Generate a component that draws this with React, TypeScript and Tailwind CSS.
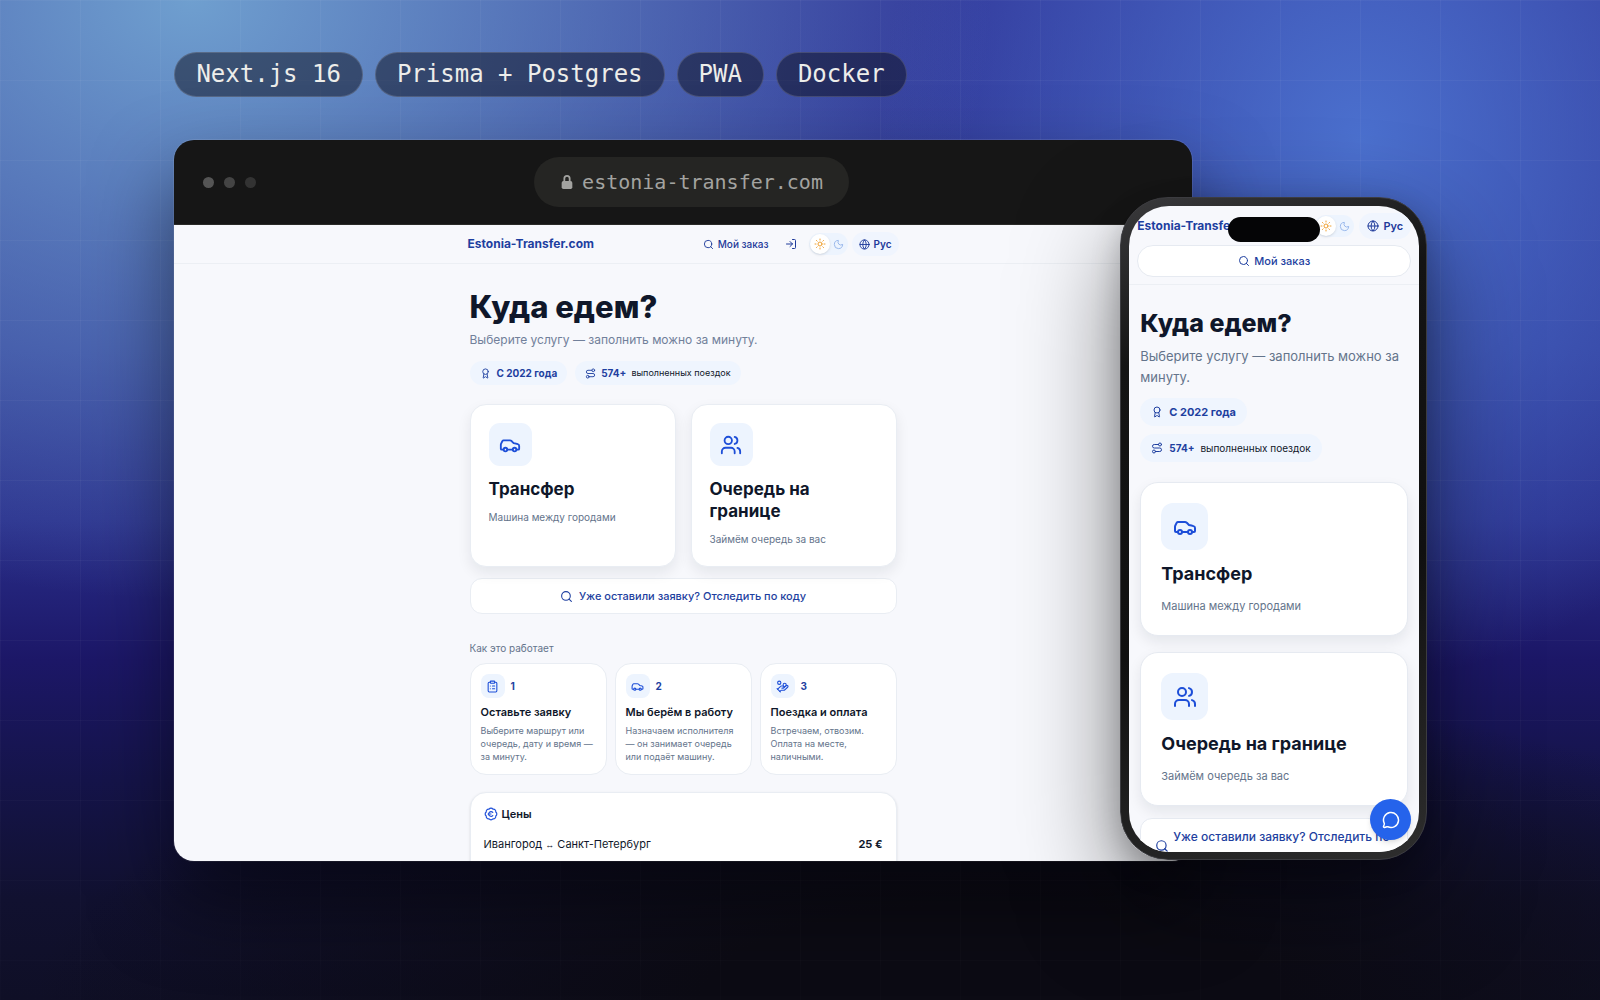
import {
  Award,
  BadgeEuro,
  Car,
  ClipboardList,
  Globe,
  HandCoins,
  LogIn,
  MessageCircle,
  Moon,
  Route,
  Search,
  Sun,
  Users,
  type LucideIcon,
} from "lucide-react";

const stack = ["Next.js 16", "Prisma + Postgres", "PWA", "Docker"];

const services: { icon: LucideIcon; title: string; text: string }[] = [
  { icon: Car, title: "Трансфер", text: "Машина между городами" },
  { icon: Users, title: "Очередь на границе", text: "Займём очередь за вас" },
];

const steps: { icon: LucideIcon; title: string; text: string }[] = [
  {
    icon: ClipboardList,
    title: "Оставьте заявку",
    text: "Выберите маршрут или очередь, дату и время — за минуту.",
  },
  {
    icon: Car,
    title: "Мы берём в работу",
    text: "Назначаем исполнителя — он занимает очередь или подаёт машину.",
  },
  {
    icon: HandCoins,
    title: "Поездка и оплата",
    text: "Встречаем, отвозим. Оплата на месте, наличными.",
  },
];

function ThemeSwitch() {
  return (
    <div className="flex items-center gap-[3px] rounded-full bg-[#edf4fe] p-px pr-1">
      <button
        aria-label="Светлая тема"
        className="flex size-5 items-center justify-center rounded-full bg-white text-[#f0a030] shadow"
      >
        <Sun className="size-3" />
      </button>
      <button aria-label="Тёмная тема" className="text-[#93b4ea]">
        <Moon className="size-[11px]" />
      </button>
    </div>
  );
}

function BrowserPage() {
  return (
    <div className="flex-1 overflow-hidden bg-[#f7f8fc] text-[#0f172a]">
      <header className="border-b border-[#eceff4]">
        <div className="mx-auto flex h-[38px] w-[431px] items-center justify-between">
          <a href="#" className="text-[12px] font-bold text-[#1e3fa0]">
            Estonia-Transfer.com
          </a>
          <div className="flex items-center gap-1 text-[#1e3a9a]">
            <a href="#" className="flex items-center gap-1 text-[10px] font-medium">
              <Search className="size-[11px]" />
              Мой заказ
            </a>
            <button aria-label="Войти" className="pr-2 pl-3">
              <LogIn className="size-3" />
            </button>
            <ThemeSwitch />
            <button className="flex h-6 items-center gap-1 rounded-full bg-[#f0f5fe] px-[7px] text-[10px] font-semibold">
              <Globe className="size-[11px]" />
              Рус
            </button>
          </div>
        </div>
      </header>

      <div className="mx-auto w-[427px] pt-[25px]">
        <h1 className="text-[31px] leading-9 font-extrabold">Куда едем?</h1>
        <p className="mt-[5px] text-[12px] leading-5 text-[#71809a]">
          Выберите услугу — заполнить можно за минуту.
        </p>
        <div className="mt-[11px] flex gap-2">
          <span className="flex h-6 items-center gap-[6px] rounded-full bg-[#eff5fe] px-[10px] text-[10px] font-bold text-[#1e3fa0]">
            <Award className="size-[11px]" />С 2022 года
          </span>
          <span className="flex h-6 items-center gap-[5px] rounded-full bg-[#eff5fe] px-[10px] text-[9px]">
            <Route className="size-[11px] text-[#1e3fa0]" />
            <b className="text-[10px] text-[#1e3fa0]">574+</b>
            выполненных поездок
          </span>
        </div>

        <div className="mt-[19px] grid grid-cols-2 gap-[15px]">
          {services.map((s) => (
            <a
              key={s.title}
              href="#"
              className="min-h-[163px] rounded-2xl border border-[#e9edf3] bg-white p-[18px] shadow-[0_6px_14px_rgba(15,23,42,0.08)]"
            >
              <span className="flex size-[43px] items-center justify-center rounded-[11px] bg-[#edf4fe] text-[#1d4ed8]">
                <s.icon className="size-[22px]" />
              </span>
              <h2 className="mt-3 text-[17px] leading-[22px] font-bold">{s.title}</h2>
              <p className="mt-[9px] text-[10px] leading-4 text-[#64748b]">{s.text}</p>
            </a>
          ))}
        </div>

        <button className="mt-[11px] flex h-9 w-full items-center justify-center gap-[6px] rounded-xl border border-[#e9edf3] bg-white text-[11px] font-medium text-[#1e3fa0]">
          <Search className="size-[13px]" />
          Уже оставили заявку? Отследить по коду
        </button>

        <h3 className="mt-[27px] text-[10px] leading-[14px] text-[#64748b]">Как это работает</h3>
        <div className="mt-2 grid grid-cols-3 gap-2">
          {steps.map((s, i) => (
            <div key={s.title} className="rounded-2xl border border-[#e9edf3] bg-white px-[10px] pt-[10px] pb-[11px]">
              <div className="flex items-center gap-[6px] text-[10px] font-bold text-[#1e3fa0]">
                <span className="flex size-6 items-center justify-center rounded-lg bg-[#edf4fe] text-[#1d4ed8]">
                  <s.icon className="size-[13px]" />
                </span>
                {i + 1}
              </div>
              <h4 className="mt-[6px] text-[11px] leading-4 font-semibold whitespace-nowrap">{s.title}</h4>
              <p className="mt-1 text-[9px] leading-[13px] text-[#64748b]">{s.text}</p>
            </div>
          ))}
        </div>

        <section className="mt-[17px] rounded-2xl border border-[#e9edf3] bg-white px-[13px] pt-3 pb-10 shadow-sm">
          <h3 className="flex items-center gap-1 text-[11px] leading-[18px] font-semibold">
            <BadgeEuro className="size-[14px] text-[#1d4ed8]" />
            Цены
          </h3>
          <div className="mt-[12px] flex justify-between text-[11px] leading-[18px]">
            <span>
              Ивангород <span className="font-['Liberation_Sans'] text-[9px]">↔</span> Санкт-Петербург
            </span>
            <b>25 €</b>
          </div>
        </section>
      </div>
    </div>
  );
}

function Phone() {
  return (
    <div className="absolute right-0 bottom-px flex aspect-[307/663] w-[24.5%] flex-col rounded-[48px] border border-[#3c3c40] bg-linear-[160deg,#3a3a3c_0%,#141414_22%,#101010_60%,#2e2e2e_100%] pt-2 pr-[7px] pb-[7px] pl-2 shadow-[0_40px_100px_rgba(0,0,0,0.5),0_10px_30px_rgba(0,0,0,0.2)]">
      <div className="relative flex-1 overflow-hidden rounded-[40px] bg-[#f7f8fc] text-[#0f172a]">
        <header className="border-b border-[#eceff4] px-2 pt-2 pb-[7px]">
          <div className="flex h-6 items-center gap-[5px] text-[#1e3a9a]">
            <a href="#" className="mr-auto text-[12px] font-bold text-[#1e3fa0]">
              Estonia-Transfer.com
            </a>
            <ThemeSwitch />
            <button className="flex h-[26px] items-center gap-1 rounded-full bg-[#f0f5fe] px-2 text-[11px] font-semibold">
              <Globe className="size-3" />
              Рус
            </button>
          </div>
          <a
            href="#"
            className="mt-[7px] flex h-8 items-center justify-center gap-1 rounded-full border border-[#e6eaf1] bg-white text-[11px] font-medium text-[#1e3fa0]"
          >
            <Search className="size-3" />
            Мой заказ
          </a>
        </header>

        <div className="px-[11px] pt-[22px]">
          <h1 className="text-[25px] leading-8 font-extrabold">Куда едем?</h1>
          <p className="mt-[7px] text-[13px] leading-[21px] text-[#64748b]">
            Выберите услугу — заполнить можно за минуту.
          </p>
          <div className="mt-[10px] flex flex-col items-start gap-2">
            <span className="flex h-7 items-center gap-[6px] rounded-full bg-[#eff5fe] px-[11px] text-[11px] font-bold text-[#1e3fa0]">
              <Award className="size-3" />С 2022 года
            </span>
            <span className="flex h-7 items-center gap-[6px] rounded-full bg-[#eff5fe] px-[11px] text-[10px]">
              <Route className="size-3 text-[#1e3fa0]" />
              <b className="text-[#1e3fa0]">574+</b>
              выполненных поездок
            </span>
          </div>

          <div className="mt-5 flex flex-col gap-4">
            {services.map((s) => (
              <a
                key={s.title}
                href="#"
                className="rounded-[18px] border border-[#e6eaf1] bg-white px-5 pt-5 pb-[19px] shadow-[0_6px_14px_rgba(15,23,42,0.08)]"
              >
                <span className="flex size-[47px] items-center justify-center rounded-xl bg-[#edf4fe] text-[#1d4ed8]">
                  <s.icon className="size-6" />
                </span>
                <h2 className="mt-3 text-[18px] leading-6 font-bold">{s.title}</h2>
                <p className="mt-[10px] text-[11px] leading-5 text-[#64748b]">{s.text}</p>
              </a>
            ))}
            <button className="-mt-1 flex items-center gap-1 rounded-xl border border-[#e6eaf1] bg-white py-2 pr-2 pl-[14px] text-left text-[12px] leading-[19px] font-medium text-[#1e3fa0]">
              <Search className="size-[14px] shrink-0" />
              <span className="flex-1">Уже оставили заявку? Отследить по коду</span>
            </button>
          </div>
        </div>

        <div className="absolute top-[11px] left-[34%] h-[25px] w-[92px] rounded-full bg-[#050506]" />
        <button
          aria-label="Чат"
          className="absolute right-2 bottom-3 flex size-[41px] items-center justify-center rounded-full bg-[#2563eb] text-white shadow-md"
        >
          <MessageCircle className="size-[18px]" />
        </button>
      </div>
    </div>
  );
}

export default function App() {
  return (
    <main className="relative min-h-screen overflow-hidden bg-[radial-gradient(ellipse_50%_60%_at_12%_0%,#6f9fcf_0%,transparent_100%),radial-gradient(ellipse_30%_54%_at_85%_14%,#4b70ce_0%,transparent_100%),radial-gradient(ellipse_60%_32%_at_62%_100%,#0c0b14_0%,#0c0b14_30%,transparent_100%),linear-gradient(180deg,#32389a_0%,#303a98_35%,#2a2f8c_52%,#1c1767_66%,#15144a_78%,#111130_90%,#0f0f26_100%)] pt-[52px] font-['Inter','Liberation_Sans',sans-serif]">
      <div className="pointer-events-none absolute inset-0 bg-[linear-gradient(to_right,rgba(255,255,255,0.04)_1px,transparent_1px),linear-gradient(to_bottom,rgba(255,255,255,0.04)_1px,transparent_1px)] mask-[linear-gradient(to_bottom,black_50%,rgba(0,0,0,0.3)_100%)] bg-size-[80px_80px]" />

      <div className="relative ml-[10.9%] w-[78.3%]">
        <ul className="flex gap-3 font-['DejaVu_Sans_Mono',monospace] text-[24px] leading-[43px] text-[#ededea]">
          {stack.map((item) => (
            <li key={item} className="rounded-full border border-white/15 bg-[#0c0d1c]/50 px-[21px] whitespace-nowrap">
              {item}
            </li>
          ))}
        </ul>

        <div className="relative mt-[43px]">
          <div className="flex aspect-[1017/721] w-[81.2%] flex-col overflow-hidden rounded-[20px] shadow-[0_40px_80px_rgba(0,0,0,0.5),0_0_0_1px_rgba(255,255,255,0.1)]">
            <div className="grid h-[85px] shrink-0 grid-cols-[1fr_auto_1fr] items-center border-b border-[#2a2a28] bg-[#161616] pr-3 pl-[29px]">
              <div className="flex gap-[10px]">
                <span className="size-[11px] rounded-full bg-[#555]" />
                <span className="size-[11px] rounded-full bg-[#444]" />
                <span className="size-[11px] rounded-full bg-[#333]" />
              </div>
              <div className="flex h-[50px] items-center gap-2 rounded-full bg-[#252523] px-[26px] font-['DejaVu_Sans_Mono',monospace] text-[20px] text-[#a3a3a0]">
                <svg viewBox="0 0 14 18" className="h-4 w-[14px]" fill="none">
                  <rect x="1" y="8" width="12" height="9" rx="2" fill="currentColor" />
                  <path d="M4 8V5a3 3 0 0 1 6 0v3" stroke="currentColor" strokeWidth="2" />
                </svg>
                estonia-transfer.com
              </div>
            </div>
            <BrowserPage />
          </div>
          <Phone />
        </div>
      </div>
    </main>
  );
}
